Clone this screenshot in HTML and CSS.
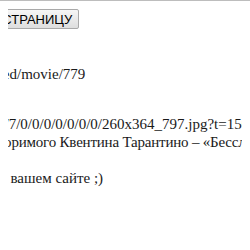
FILE: index.html
```html
<!DOCTYPE html>
<html>
<head>
<meta charset="utf-8">
<link rel="stylesheet" href="styles.css">
</head>
<body>
<div class="toolbar">
  <button class="reload" type="button">ОБНОВИТЬ СТРАНИЦУ</button>
</div>
<div class="content">
  <p class="line url">embed/movie/779</p>
  <p class="line img">0/7/0/0/0/0/0/0/0/260x364_797.jpg?t=1500000000</p>
  <p class="line desc">неповторимого Квентина Тарантино – «Бесславные ублюдки»</p>
  <p class="line note">на вашем сайте ;)</p>
</div>
</body>
</html>
```
FILE: styles.css
```css
html {
  border-top: 1px solid #bdbdbd;
  background: #fff;
  overflow: hidden;
}
body {
  margin: 8px;
  font-family: "Liberation Serif", "Times New Roman", serif;
  font-size: 15px;
  color: #1a1a1a;
}
.toolbar {
  display: flex;
  margin-left: -89px;
}
.reload {
  font-family: "Liberation Sans", Arial, sans-serif;
  font-size: 13px;
  color: #000;
  background: linear-gradient(#f6f6f6, #dedede);
  border: 1px solid #a9a9a9;
  border-radius: 2px;
  padding: 1px 6px;
  height: 20px;
  white-space: nowrap;
}
.content {
  white-space: nowrap;
}
.line {
  margin: 0;
  line-height: 18px;
}
.url {
  margin-top: 36px;
  margin-left: -31px;
}
.img {
  margin-top: 32px;
  margin-left: -11px;
}
.desc {
  margin-left: -46px;
  letter-spacing: -0.2px;
}
.note {
  margin-top: 18px;
  margin-left: -16px;
}
```
